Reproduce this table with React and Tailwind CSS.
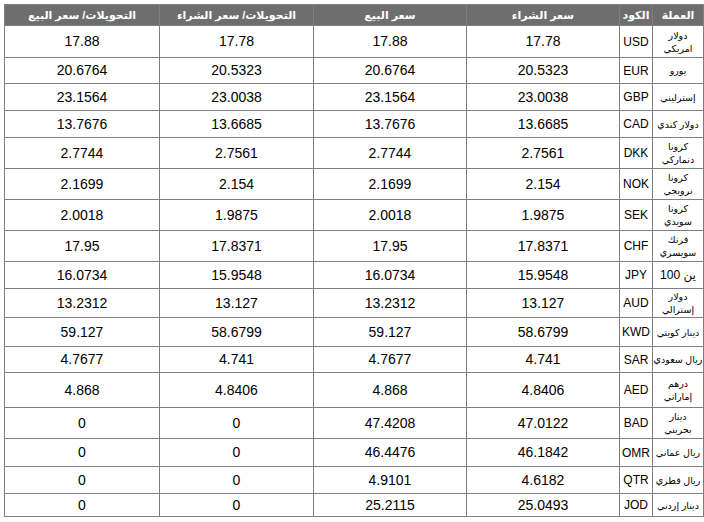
import React from 'react';

// Currency rates table (RTL)
const rows = [
  { name: ['دولار', 'امريكي'], code: 'USD', buy: '17.78', sell: '17.88', tBuy: '17.78', tSell: '17.88', h: 'h-[32px]' },
  { name: ['يورو'], code: 'EUR', buy: '20.5323', sell: '20.6764', tBuy: '20.5323', tSell: '20.6764', h: 'h-[26px]' },
  { name: ['إسترليني'], code: 'GBP', buy: '23.0038', sell: '23.1564', tBuy: '23.0038', tSell: '23.1564', h: 'h-[27px]' },
  { name: ['دولار كندي'], code: 'CAD', buy: '13.6685', sell: '13.7676', tBuy: '13.6685', tSell: '13.7676', h: 'h-[27px]' },
  { name: ['كرونا', 'دنماركي'], code: 'DKK', buy: '2.7561', sell: '2.7744', tBuy: '2.7561', tSell: '2.7744', h: 'h-[31px]' },
  { name: ['كرونا', 'نرويجي'], code: 'NOK', buy: '2.154', sell: '2.1699', tBuy: '2.154', tSell: '2.1699', h: 'h-[31px]' },
  { name: ['كرونا', 'سويدي'], code: 'SEK', buy: '1.9875', sell: '2.0018', tBuy: '1.9875', tSell: '2.0018', h: 'h-[31px]' },
  { name: ['فرنك', 'سويسري'], code: 'CHF', buy: '17.8371', sell: '17.95', tBuy: '17.8371', tSell: '17.95', h: 'h-[31px]' },
  { name: ['ين 100'], code: 'JPY', buy: '15.9548', sell: '16.0734', tBuy: '15.9548', tSell: '16.0734', h: 'h-[27px]', big: true },
  { name: ['دولار', 'إسترالي'], code: 'AUD', buy: '13.127', sell: '13.2312', tBuy: '13.127', tSell: '13.2312', h: 'h-[29px]' },
  { name: ['دينار كويتي'], code: 'KWD', buy: '58.6799', sell: '59.127', tBuy: '58.6799', tSell: '59.127', h: 'h-[29px]' },
  { name: ['ريال سعودي'], code: 'SAR', buy: '4.741', sell: '4.7677', tBuy: '4.741', tSell: '4.7677', h: 'h-[26px]' },
  { name: ['درهم', 'إماراتي'], code: 'AED', buy: '4.8406', sell: '4.868', tBuy: '4.8406', tSell: '4.868', h: 'h-[35px]' },
  { name: ['دينار', 'بحريني'], code: 'BAD', buy: '47.0122', sell: '47.4208', tBuy: '0', tSell: '0', h: 'h-[31px]' },
  { name: ['ريال عماني'], code: 'OMR', buy: '46.1842', sell: '46.4476', tBuy: '0', tSell: '0', h: 'h-[28px]' },
  { name: ['ريال قطري'], code: 'QTR', buy: '4.6182', sell: '4.9101', tBuy: '0', tSell: '0', h: 'h-[27px]' },
  { name: ['دينار إردني'], code: 'JOD', buy: '25.0493', sell: '25.2115', tBuy: '0', tSell: '0', h: 'h-[23px]' },
];

const th = 'border border-[#7f7f7f] bg-[#6e6e6e] text-white font-bold text-[11px] text-center p-0';
const td = 'border border-[#7f7f7f] text-center text-[14px] text-black p-0';

export default function App() {
  return (
    <div className="bg-white w-[704px] h-[522px] pt-[4px] pl-[4px] font-['Liberation_Sans','DejaVu_Sans',sans-serif]">
      <table dir="rtl" className="table-fixed border-collapse w-[699px]">
        <colgroup>
          <col className="w-[51px]" />
          <col className="w-[33px]" />
          <col className="w-[153px]" />
          <col className="w-[153px]" />
          <col className="w-[154px]" />
          <col className="w-[155px]" />
        </colgroup>
        <thead>
          <tr className="h-[21px]">
            <th className={th}>العملة</th>
            <th className={th}>الكود</th>
            <th className={th}>سعر الشراء</th>
            <th className={th}>سعر البيع</th>
            <th className={th}>التحويلات/ سعر الشراء</th>
            <th className={th}>التحويلات/ سعر البيع</th>
          </tr>
        </thead>
        <tbody>
          {rows.map((r) => (
            <tr key={r.code} className={r.h}>
              <td className="border border-[#7f7f7f] text-center p-0 leading-[13px] text-black">
                {r.name.map((line, i) => (
                  <div key={i} className={r.big ? 'text-[12px] whitespace-nowrap' : 'text-[9.5px] whitespace-nowrap'}>{line}</div>
                ))}
              </td>
              <td className="border border-[#7f7f7f] text-center p-0 text-[12px] text-black">{r.code}</td>
              <td className={td}>{r.buy}</td>
              <td className={td}>{r.sell}</td>
              <td className={td}>{r.tBuy}</td>
              <td className={td}>{r.tSell}</td>
            </tr>
          ))}
        </tbody>
      </table>
    </div>
  );
}
